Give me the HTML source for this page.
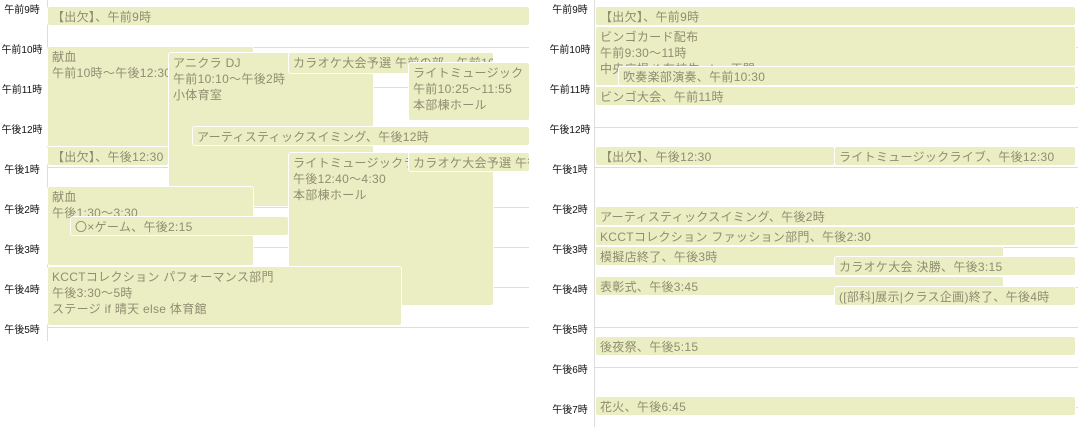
<!DOCTYPE html>
<html><head><meta charset="utf-8"><style>
body{margin:0;width:1078px;height:427px;overflow:hidden;background:#fff;position:relative;font-family:"Liberation Sans","Noto Sans CJK JP",sans-serif;}
.l{position:absolute;font-size:10px;color:#111;width:44px;text-align:center;line-height:12px;white-space:nowrap}
.g{position:absolute;height:1px;background:#ddd}
.ax{position:absolute;width:1px;background:#ddd}
.b{position:absolute;box-sizing:border-box;background:#ebedc3;border:1px solid #fff;border-radius:3px;color:#8e8e70;font-size:12px;line-height:16px;padding:2px 4px 0;overflow:hidden;white-space:nowrap;letter-spacing:0.3px}
</style></head><body>
<!-- left panel -->
<div class="ax" style="left:47px;top:0;height:341px"></div>
<div class="g" style="left:47px;width:482px;top:47px"></div>
<div class="g" style="left:47px;width:482px;top:87px"></div>
<div class="g" style="left:47px;width:482px;top:127px"></div>
<div class="g" style="left:47px;width:482px;top:167px"></div>
<div class="g" style="left:47px;width:482px;top:207px"></div>
<div class="g" style="left:47px;width:482px;top:247px"></div>
<div class="g" style="left:47px;width:482px;top:287px"></div>
<div class="g" style="left:47px;width:482px;top:327px"></div>
<div class="l" style="left:0;top:5px">午前9時</div>
<div class="l" style="left:0;top:45px">午前10時</div>
<div class="l" style="left:0;top:85px">午前11時</div>
<div class="l" style="left:0;top:125px">午後12時</div>
<div class="l" style="left:0;top:165px">午後1時</div>
<div class="l" style="left:0;top:205px">午後2時</div>
<div class="l" style="left:0;top:245px">午後3時</div>
<div class="l" style="left:0;top:285px">午後4時</div>
<div class="l" style="left:0;top:325px">午後5時</div>

<div class="b" style="left:47px;top:6px;width:483px;height:20px">【出欠】、午前9時</div>
<div class="b" style="left:47px;top:46px;width:207px;height:102px">献血<br>午前10時～午後12:30</div>
<div class="b" style="left:168px;top:52px;width:206px;height:155px">アニクラ DJ<br>午前10:10～午後2時<br>小体育室</div>
<div class="b" style="left:288px;top:52px;width:206px;height:22px">カラオケ大会予選 午前の部、午前10</div>
<div class="b" style="left:408px;top:62px;width:122px;height:59px">ライトミュージック<br>午前10:25～11:55<br>本部棟ホール</div>
<div class="b" style="left:192px;top:126px;width:338px;height:20px">アーティスティックスイミング、午後12時</div>
<div class="b" style="left:47px;top:146px;width:122px;height:20px">【出欠】、午後12:30</div>
<div class="b" style="left:288px;top:152px;width:206px;height:154px">ライトミュージックライブ<br>午後12:40～4:30<br>本部棟ホール</div>
<div class="b" style="left:408px;top:152px;width:122px;height:20px">カラオケ大会予選 午後</div>
<div class="b" style="left:47px;top:186px;width:207px;height:80px">献血<br>午後1:30～3:30</div>
<div class="b" style="left:70px;top:216px;width:219px;height:20px">〇×ゲーム、午後2:15</div>
<div class="b" style="left:47px;top:266px;width:355px;height:60px">KCCTコレクション パフォーマンス部門<br>午後3:30～5時<br>ステージ if 晴天 else 体育館</div>

<!-- right panel -->
<div class="ax" style="left:594px;top:0;height:427px"></div>
<div class="g" style="left:594px;width:484px;top:47px"></div>
<div class="g" style="left:594px;width:484px;top:87px"></div>
<div class="g" style="left:594px;width:484px;top:127px"></div>
<div class="g" style="left:594px;width:484px;top:167px"></div>
<div class="g" style="left:594px;width:484px;top:207px"></div>
<div class="g" style="left:594px;width:484px;top:247px"></div>
<div class="g" style="left:594px;width:484px;top:287px"></div>
<div class="g" style="left:594px;width:484px;top:327px"></div>
<div class="g" style="left:594px;width:484px;top:367px"></div>
<div class="g" style="left:594px;width:484px;top:407px"></div>
<div class="l" style="left:548px;top:5px">午前9時</div>
<div class="l" style="left:548px;top:45px">午前10時</div>
<div class="l" style="left:548px;top:85px">午前11時</div>
<div class="l" style="left:548px;top:125px">午後12時</div>
<div class="l" style="left:548px;top:165px">午後1時</div>
<div class="l" style="left:548px;top:205px">午後2時</div>
<div class="l" style="left:548px;top:245px">午後3時</div>
<div class="l" style="left:548px;top:285px">午後4時</div>
<div class="l" style="left:548px;top:325px">午後5時</div>
<div class="l" style="left:548px;top:365px">午後6時</div>
<div class="l" style="left:548px;top:405px">午後7時</div>

<div class="b" style="left:595px;top:6px;width:481px;height:20px">【出欠】、午前9時</div>
<div class="b" style="left:595px;top:26px;width:481px;height:60px">ビンゴカード配布<br>午前9:30～11時<br>中央広場 if 在校生 else 正門</div>
<div class="b" style="left:618px;top:66px;width:458px;height:20px">吹奏楽部演奏、午前10:30</div>
<div class="b" style="left:595px;top:86px;width:481px;height:20px">ビンゴ大会、午前11時</div>
<div class="b" style="left:595px;top:146px;width:240px;height:20px">【出欠】、午後12:30</div>
<div class="b" style="left:834px;top:146px;width:242px;height:20px">ライトミュージックライブ、午後12:30</div>
<div class="b" style="left:595px;top:206px;width:481px;height:20px">アーティスティックスイミング、午後2時</div>
<div class="b" style="left:595px;top:226px;width:481px;height:20px">KCCTコレクション ファッション部門、午後2:30</div>
<div class="b" style="left:595px;top:246px;width:409px;height:20px">模擬店終了、午後3時</div>
<div class="b" style="left:834px;top:256px;width:242px;height:20px">カラオケ大会 決勝、午後3:15</div>
<div class="b" style="left:595px;top:276px;width:409px;height:20px">表彰式、午後3:45</div>
<div class="b" style="left:834px;top:286px;width:242px;height:20px">([部科]展示|クラス企画)終了、午後4時</div>
<div class="b" style="left:595px;top:336px;width:481px;height:20px">後夜祭、午後5:15</div>
<div class="b" style="left:595px;top:396px;width:481px;height:20px">花火、午後6:45</div>
</body></html>
